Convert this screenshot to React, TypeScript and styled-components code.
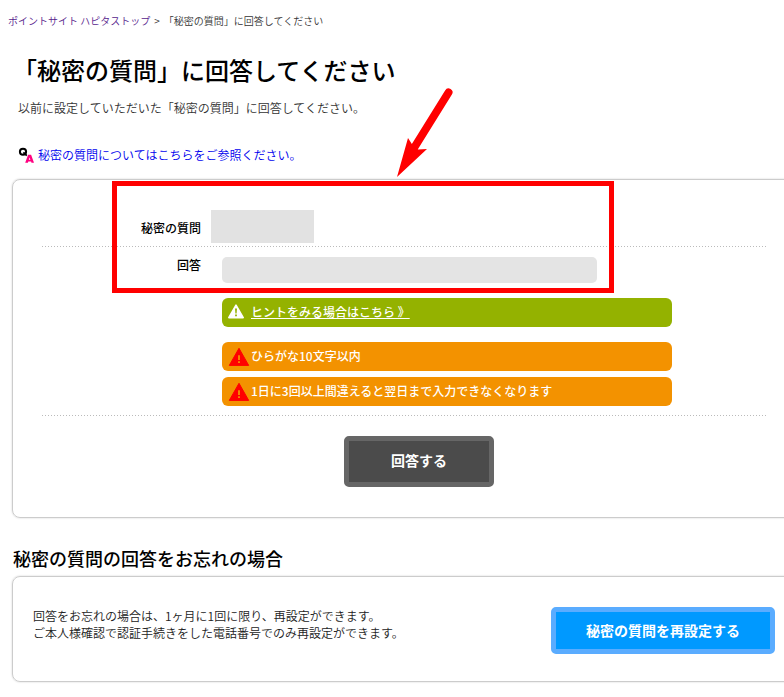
import React from "react";
import styled, { createGlobalStyle } from "styled-components";

const GlobalStyle = createGlobalStyle`
  * { box-sizing: border-box; }
  body {
    margin: 0;
    background: #fff;
    color: #333;
    font-family: "Noto Sans CJK JP", sans-serif;
    font-size: 12px;
    font-weight: 350;
    overflow: hidden;
  }
  h1, h2, p, dl, dt, dd { margin: 0; }
`;

const Page = styled.main`
  position: relative;
  width: 784px;
  height: 697px;
  overflow: hidden;
`;

const Breadcrumb = styled.nav`
  display: flex;
  gap: 4px;
  height: 42px;
  padding: 13px 0 0 8px;
  font-size: 10px;
  line-height: 15px;
  white-space: nowrap;
`;

const CrumbLink = styled.a`
  color: #551a8b;
`;

const PageTitle = styled.h1`
  height: 56px;
  padding-left: 13px;
  font-size: 24px;
  font-weight: 500;
  line-height: 56px;
  color: #000;
`;

const Lead = styled.p`
  height: 20px;
  padding-left: 18px;
  line-height: 20px;
`;

const HelpLink = styled.a`
  display: flex;
  align-items: center;
  gap: 4px;
  width: max-content;
  height: 20px;
  margin: 27px 0 0 18px;
  line-height: 20px;
  color: #0000ee;
`;

const Card = styled.section`
  width: 790px;
  margin-left: 12px;
  border: 1px solid #ccc;
  border-radius: 8px;
  box-shadow: 0 0 2px rgba(0, 0, 0, 0.2);
`;

const QuestionCard = styled(Card)`
  height: 339px;
  margin-top: 14px;
  padding: 30px 35px 0 29px;
`;

const DottedRule = styled.div`
  width: 724px;
  height: 1px;
  background: repeating-linear-gradient(90deg, #bbb 0 1px, transparent 1px 3px);
`;

const Field = styled.dl<{ $gap: number; $height: number }>`
  display: grid;
  grid-template-columns: 160px 450px;
  column-gap: ${(p) => p.$gap}px;
  height: ${(p) => p.$height}px;
`;

const FieldLabel = styled.dt`
  padding: 9px 1px 0 0;
  font-weight: 500;
  line-height: 18px;
  text-align: right;
  color: #000;
`;

const QuestionValue = styled.dd`
  width: 103px;
  height: 33px;
  background: #e2e2e2;
`;

const FieldBody = styled.dd`
  padding-top: 10px;
`;

const AnswerInput = styled.div`
  width: 375px;
  height: 26px;
  border-radius: 5px;
  background: #e4e4e4;
`;

const Notice = styled.div<{ $color: string; $top: number }>`
  display: flex;
  align-items: center;
  height: 29px;
  margin-top: ${(p) => p.$top}px;
  padding: 0 0 2px 6px;
  border-radius: 6px;
  background: ${(p) => p.$color};
  color: #fff;
  font-weight: 500;
  line-height: 17px;
`;

const HintLink = styled.a`
  margin-left: 6px;
  color: #fff;
  text-decoration: underline;
`;

const NoticeText = styled.span`
  margin-left: 1px;
`;

const Button = styled.button<{ $tone: "dark" | "blue" }>`
  display: block;
  flex: none;
  padding: 0 0 ${(p) => (p.$tone === "dark" ? 3 : 1)}px;
  width: ${(p) => (p.$tone === "dark" ? 150 : 224)}px;
  height: ${(p) => (p.$tone === "dark" ? 51 : 47)}px;
  border: 5px solid ${(p) => (p.$tone === "dark" ? "#666" : "#5aacff")};
  border-radius: 5px;
  background: ${(p) => (p.$tone === "dark" ? "#4b4b4b" : "#0099ff")};
  color: #fff;
  font: bold 14px/20px "Noto Sans CJK JP", sans-serif;
`;

const SubmitArea = styled.div`
  padding: 20px 0 0 302px;
`;

const SectionTitle = styled.h2`
  height: 58px;
  padding: 27px 0 0 13px;
  font-size: 18px;
  font-weight: 500;
  line-height: 26px;
  color: #000;
`;

const ResetCard = styled(Card)`
  display: flex;
  height: 106px;
  padding: 30px 0 0 20px;
`;

const ResetText = styled.p`
  width: 518px;
  line-height: 17px;
  color: #222;
`;

const Highlight = styled.div`
  position: absolute;
  left: 112px;
  top: 181px;
  width: 502px;
  height: 112px;
  border: 5px solid #f00;
`;

const Arrow = styled.svg`
  position: absolute;
  left: 390px;
  top: 80px;
`;

const QaIcon = () => (
  <svg width="16" height="16" viewBox="0 0 16 16">
    <ellipse cx="5" cy="4.8" rx="3.1" ry="3" fill="none" stroke="#000" strokeWidth="2" />
    <path d="M5.4 5.4L8.8 8.6" stroke="#000" strokeWidth="1.8" />
    <path
      d="M10.1 7.8h3L16 15.8h-2.5l-.4-1.3h-2.8l-.4 1.3H7.2zM11.6 10.4l-.8 2.3h1.6z"
      fill="#ff0080"
      fillRule="evenodd"
    />
  </svg>
);

const HintIcon = () => (
  <svg width="17" height="15" viewBox="0 0 17 15">
    <path
      d="M8 1.2L15.2 13.6H.8z"
      fill="#fff"
      stroke="#fff"
      strokeWidth="1.6"
      strokeLinejoin="round"
    />
    <path d="M7 4.5h2l-.4 5H7.4zM7.1 10.4h1.8v1.8H7.1z" fill="#94b200" />
  </svg>
);

const WarningIcon = styled(({ className }: { className?: string }) => (
  <svg className={className} width="22" height="20" viewBox="0 0 22 20">
    <path
      d="M11 1.3L20.7 18.4H1.3z"
      fill="#f00"
      stroke="#f00"
      strokeWidth="1"
      strokeLinejoin="round"
    />
    <path d="M10.1 8.3h1.8v4.8h-1.8zM10.1 14.3h1.8V16h-1.8z" fill="#f39200" />
  </svg>
))`
  margin-top: 2px;
`;

export default function App() {
  return (
    <Page>
      <GlobalStyle />
      <Breadcrumb>
        <CrumbLink>ポイントサイト ハピタストップ</CrumbLink>
        <span>&gt;</span>
        <span>「秘密の質問」に回答してください</span>
      </Breadcrumb>
      <PageTitle>「秘密の質問」に回答してください</PageTitle>
      <Lead>以前に設定していただいた「秘密の質問」に回答してください。</Lead>
      <HelpLink>
        <QaIcon />
        秘密の質問についてはこちらをご参照ください。
      </HelpLink>

      <QuestionCard>
        <Field $gap={9} $height={36}>
          <FieldLabel>秘密の質問</FieldLabel>
          <QuestionValue />
        </Field>
        <DottedRule />
        <Field $gap={20} $height={168}>
          <FieldLabel>回答</FieldLabel>
          <FieldBody>
            <AnswerInput />
            <Notice $color="#94b200" $top={15}>
              <HintIcon />
              <HintLink>ヒントをみる場合はこちら 》</HintLink>
            </Notice>
            <Notice $color="#f39200" $top={15}>
              <WarningIcon />
              <NoticeText>ひらがな10文字以内</NoticeText>
            </Notice>
            <Notice $color="#f39200" $top={6}>
              <WarningIcon />
              <NoticeText>1日に3回以上間違えると翌日まで入力できなくなります</NoticeText>
            </Notice>
          </FieldBody>
        </Field>
        <DottedRule />
        <SubmitArea>
          <Button $tone="dark">回答する</Button>
        </SubmitArea>
      </QuestionCard>

      <SectionTitle>秘密の質問の回答をお忘れの場合</SectionTitle>
      <ResetCard>
        <ResetText>
          回答をお忘れの場合は、1ヶ月に1回に限り、再設定ができます。
          <br />
          ご本人様確認で認証手続きをした電話番号でのみ再設定ができます。
        </ResetText>
        <Button $tone="blue">秘密の質問を再設定する</Button>
      </ResetCard>

      <Highlight />
      <Arrow width="70" height="105" viewBox="0 0 70 105">
        <path d="M58.5 12.5L24 68" stroke="#f00" strokeWidth="8" strokeLinecap="round" />
        <path d="M7 97L18 58L22.5 65L28 69.5L37 69z" fill="#f00" />
      </Arrow>
    </Page>
  );
}
